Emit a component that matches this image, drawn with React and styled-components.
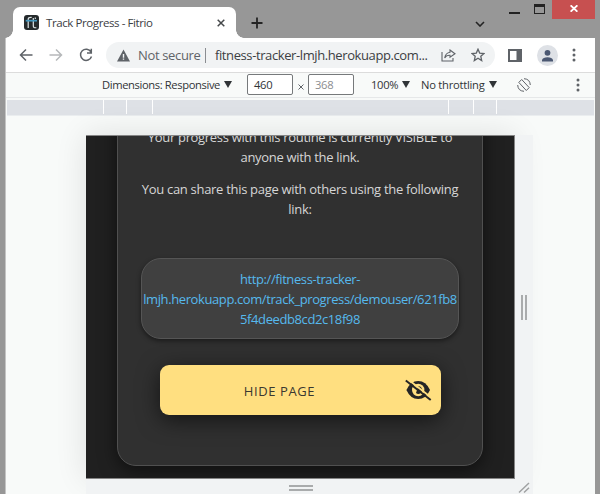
import React from "react";
import styled, { createGlobalStyle } from "styled-components";

const Global = createGlobalStyle`
  * { box-sizing: border-box; }
  body { margin: 0; overflow: hidden; font-family: "Open Sans", "Noto Sans", sans-serif; }
`;

const Desktop = styled.div`
  width: 600px; height: 494px; background: #979797; padding: 0 5px;
  display: flex; flex-direction: column; overflow: hidden;
`;
const TabStrip = styled.header`
  height: 38px; display: flex; align-items: flex-start; flex: none;
`;
const Tab = styled.div`
  position: relative; margin: 7px 0 0 8px; width: 223px; height: 31px; background: #fff;
  border-radius: 7px 7px 0 0; display: flex; align-items: center; padding: 0 11px 0 11px;
  &::before, &::after {
    content: ""; position: absolute; bottom: 0; width: 8px; height: 8px;
  }
  &::before { left: -8px; background: radial-gradient(circle at 0 0, transparent 7.5px, #fff 8px); }
  &::after { right: -8px; background: radial-gradient(circle at 100% 0, transparent 7.5px, #fff 8px); }
`;
const TabTitle = styled.span`
  margin-left: 7px; flex: 1; font-size: 11.5px; letter-spacing: ${(p) => p.$track}px;
  color: #3c4043; white-space: nowrap; line-height: 16px;
`;
const NewTab = styled.div`margin: 17px 0 0 15px; height: 12px; display: flex;`;
const TabSearch = styled.div`margin: 21px 0 0 auto; height: 6px; display: flex;`;
const Minimise = styled.div`width: 11px; height: 2px; background: #222; margin: 12px 0 0 24px;`;
const Maximise = styled.div`
  width: 11px; height: 10px; border: 1px solid #222; border-top-width: 3px; margin: 4px 0 0 14px;
`;
const Close = styled.div`
  width: 43px; height: 19px; background: #c75050; margin-left: 7px;
  display: flex; align-items: center; justify-content: center; padding-bottom: 2px;
`;
const Body = styled.main`
  flex: 1; min-height: 0; display: flex; flex-direction: column; background: #f8faf9;
  border-left: 1px solid #c4c4c4;
`;
const Toolbar = styled.nav`
  height: 35px; flex: none; background: #fff; border-bottom: 1px solid #dcdcdc;
  display: flex; align-items: center; padding: 0 19px 0 13px;
`;
const NavIcons = styled.div`display: flex; gap: 16px; width: 87px;`;
const Address = styled.div`
  width: 389px; height: 26px; border-radius: 13px; background: #f1f3f4;
  display: flex; align-items: center; padding: 0 10px 0 11px; white-space: nowrap;
  font-size: 13px; line-height: 20px;
`;
const Security = styled.span`
  margin-left: 8px; color: #5f6368; width: 67px; letter-spacing: ${(p) => p.$track}px;
`;
const Rule = styled.i`width: 1px; height: 15px; background: #8a8d91; margin-right: 9px;`;
const Url = styled.span`color: #3c4043; flex: 1; letter-spacing: ${(p) => p.$track}px;`;
const AddressIcons = styled.span`display: flex; gap: 15px;`;
const Actions = styled.div`
  flex: 1; display: flex; align-items: center; justify-content: space-between; padding-left: 13px;
`;
const Avatar = styled.span`
  width: 21px; height: 21px; border-radius: 50%; background: #dee1e6; display: flex;
`;
const DeviceBar = styled.div`
  height: 25px; flex: none; display: flex; align-items: center; padding: 0 15px 1px 96px;
  border-bottom: 1px solid #e6e8e9; font-size: 11.2px; color: #303437; white-space: nowrap;
  background: #f8faf9;
`;
const Choice = styled.span`
  display: flex; align-items: center; justify-content: space-between; width: ${(p) => p.$w}px;
  margin-right: ${(p) => p.$gap}px; letter-spacing: ${(p) => p.$track}px;
`;
const Caret = styled.i`
  border: 4px solid transparent; border-top: 7px solid #303437; border-bottom: 0;
`;
const SizeField = styled.span`
  width: 46px; height: 21px; border: 1px solid #76797b; border-radius: 2px; background: #fff;
  padding-left: 6px; line-height: 19px; letter-spacing: -0.3px; flex: none;
  color: ${(p) => (p.$muted ? "#8b8d8f" : "#303437")};
`;
const Times = styled.span`width: 15px; display: flex; justify-content: center; padding-top: 4px;`;
const Zoom = styled.span`display: flex; margin-left: 17px;`;
const Rotate = styled.span`display: flex; flex: 1;`;
const Ruler = styled.div`
  height: 16px; flex: none; margin: 2px 1px 0 1px; background: #dee1e6; display: flex;
  border-bottom: 1px solid #eaedef;
`;
const Tick = styled.i`
  width: ${(p) => p.$w}px; border-right: 1px solid #fff; margin-bottom: 1px;
`;
const Stage = styled.section`
  flex: 1; min-height: 0; display: grid; grid-template-columns: 429px 18px;
  grid-template-rows: 344px 16px; padding: 19px 0 0 80px;
`;
const Screen = styled.div`
  overflow: hidden; background: #202020; border: solid #858585; border-width: 1px 1px 1px 0;
  box-shadow: 0 0 30px #0000001c; padding: 0 0 0 31px;
`;
const Card = styled.article`
  width: 366px; height: 360px; margin-top: -30px; background: #303030; border: 1px solid #505050;
  border-radius: 19px; box-shadow: 0 5px 18px #0008; padding-top: 21px;
  display: flex; flex-direction: column; align-items: center; color: #d6d6d6;
`;
const Copy = styled.p`
  margin: 0 0 13px; font-size: 13px; line-height: 19.6px; text-align: center;
  white-space: nowrap; letter-spacing: ${(p) => p.$track}px;
`;
const LinkBox = styled.a`
  width: 318px; height: 81px; margin-top: 26px; border: 1px solid #555; border-radius: 20px;
  background: #404040; box-shadow: 0 2px 5px #0007; color: #56b9ed; font-size: 13px;
  line-height: 19.7px; text-align: center; padding-top: 11px; white-space: nowrap;
  letter-spacing: ${(p) => p.$track}px;
`;
const HideButton = styled.button`
  width: 281px; height: 50px; flex: none; margin-top: 26px; border: 0; border-radius: 9px;
  background: #ffdf80; box-shadow: 0 5px 22px #0009; display: flex; align-items: center;
  padding: 0 9px 0 0; font: 13px "Open Sans", sans-serif; color: #3a3830;
`;
const HideLabel = styled.span`flex: 1; text-align: center; letter-spacing: 0.6px; padding: 2px 4px 0 0;`;
const RightHandle = styled.div`
  background: #f1f3f4; display: flex; align-items: center; justify-content: center;
`;
const BottomHandle = styled.div`
  background: #f1f3f4; display: flex; justify-content: center; padding-top: 6px;
`;
const Grip = styled.i`
  width: ${(p) => (p.$vertical ? 6 : 24)}px; height: ${(p) => (p.$vertical ? 25 : 6)}px;
  border: 0 solid #a9abac; border-width: ${(p) => (p.$vertical ? "0 2px" : "2px 0")};
`;
const Corner = styled.div`background: #f1f3f4; display: flex; padding: 3px 0 0 3px;`;

const Stroke = ({ w = 12, h = w, box = `0 0 ${w} ${h}`, color = "#5f6368", sw = 1.5, d }) => (
  <svg width={w} height={h} viewBox={box} fill="none" stroke={color} strokeWidth={sw}><path d={d} /></svg>
);
const Solid = ({ size, color, d }) => (
  <svg width={size} height={size} viewBox="0 0 24 24" fill={color}><path d={d} /></svg>
);
const Dots = () => (
  <svg width="4" height="14" viewBox="0 0 4 14" fill="#5f6368">
    <circle cx="2" cy="2" r="1.5" /><circle cx="2" cy="7" r="1.5" /><circle cx="2" cy="12" r="1.5" />
  </svg>
);
const Favicon = () => (
  <svg width="15" height="15" viewBox="0 0 15 15">
    <rect width="15" height="15" rx="3" fill="#252a2c" />
    <path d="M4.2 13V4.2Q4.2 2.3 6.8 2.3H7.7M9.3 3V11Q9.3 13 12.3 12.7M11.3 2.5V4" fill="none" stroke="#dce4e6" strokeWidth="1.2" />
    <path d="M1.7 5.7H13" stroke="#4095bd" strokeWidth="1.7" />
  </svg>
);
const EyeOff = () => (
  <svg width="28" height="24" viewBox="0 0 28 24">
    <path d="M2.4 12Q6.5 3 14.2 3T26 12Q22 21 14.2 21T2.4 12Z" fill="#252525" />
    <circle cx="14.2" cy="12" r="6.2" fill="#ffdf80" />
    <path d="M14.2 8.3A3.8 3.8 0 1 1 12 15Z" fill="#252525" />
    <path d="M3.2 .8L27.7 20" stroke="#ffdf80" strokeWidth="1.8" />
    <path d="M1.8 2.5L26.7 22" stroke="#252525" strokeWidth="2" />
  </svg>
);

const rulerTicks = [97, 23, 26, 296, 25, 23];

export default function App() {
  return (
    <Desktop>
      <Global />
      <TabStrip>
        <Tab>
          <Favicon />
          <TabTitle $track={-0.41}>Track Progress - Fitrio</TabTitle>
          <Stroke w={8} color="#45484a" d="M.7 .7L7.3 7.3M7.3 .7L.7 7.3" />
        </Tab>
        <NewTab><Stroke w={12} color="#242424" sw={1.8} d="M6 .5V11.5M.5 6H11.5" /></NewTab>
        <TabSearch><Stroke w={10} h={6} color="#242424" sw={1.6} d="M1 1L5 5L9 1" /></TabSearch>
        <Minimise />
        <Maximise />
        <Close><Stroke w={8} h={7} color="#fff" sw={1.8} d="M.6 .3L7.4 6.7M7.4 .3L.6 6.7" /></Close>
      </TabStrip>
      <Body>
        <Toolbar>
          <NavIcons>
            <Stroke w={14} d="M13.5 7H2M7 1.5L1.5 7L7 12.5" />
            <Stroke w={14} color="#b6b8ba" d="M.5 7H12M7 1.5L12.5 7L7 12.5" />
            <Stroke w={14} d="M12 4A5.6 5.6 0 1 0 12.5 8.5M12.3 .8V5H8" />
          </NavIcons>
          <Address>
            <Solid size={13} color="#5f6368" d="M12 1L0 23h24L12 1zm-1.3 8h2.6v7h-2.6V9zm0 8.5h2.6V20h-2.6z" />
            <Security $track={-0.35}>Not secure</Security>
            <Rule />
            <Url $track={-0.4}>fitness-tracker-lmjh.herokuapp.com...</Url>
            <AddressIcons>
              <Stroke w={15} h={14} sw={1.1} d="M1 4V13H12V10M9 2L14 5.8L9 9.3V7.3Q5.5 7 3.7 10Q4.5 4.8 9 4.2Z" />
              <Stroke w={14} sw={1.3} d="M7 1.2L8.7 5.1L13 5.5L9.8 8.3L10.7 12.6L7 10.3L3.3 12.6L4.2 8.3L1 5.5L5.3 5.1Z" />
            </AddressIcons>
          </Address>
          <Actions>
            <svg width="14" height="13" viewBox="0 0 14 13"><path fill="#5f6368" d="M0 0H14V13H0ZM2 2V11H8.5V2Z" fillRule="evenodd" /></svg>
            <Avatar>
              <svg width="21" height="21" viewBox="0 0 21 21" fill="#4b5872">
                <circle cx="10.5" cy="7.8" r="2.9" /><path d="M5 16.5V14.8Q6 12.2 10.5 12.2T16 14.8V16.5Z" />
              </svg>
            </Avatar>
            <Dots />
          </Actions>
        </Toolbar>
        <DeviceBar>
          <Choice $w={130} $gap={15} $track={-0.38}>Dimensions: Responsive<Caret /></Choice>
          <SizeField>460</SizeField>
          <Times><Stroke w={6} sw={1} d="M.5 .5L5.5 5.5M5.5 .5L.5 5.5" /></Times>
          <SizeField $muted>368</SizeField>
          <Zoom><Choice $w={39} $gap={11} $track={-0.3}>100%<Caret /></Choice></Zoom>
          <Choice $w={76} $gap={20} $track={-0.25}>No throttling<Caret /></Choice>
          <Rotate>
            <Stroke w={14} sw={1} d="M4.7 1.5L1.8 4.4L9.3 12.5L12.2 9.6ZM7 .7Q13 1 13.3 7M.7 7Q1 13 7 13.3" />
          </Rotate>
          <Dots />
        </DeviceBar>
        <Ruler>{rulerTicks.map((w, i) => <Tick key={i} $w={w} />)}</Ruler>
        <Stage>
          <Screen>
            <Card>
              <Copy $track={-0.32}>Your progress with this routine is currently VISIBLE to<br />anyone with the link.</Copy>
              <Copy $track={-0.3}>You can share this page with others using the following<br />link:</Copy>
              <LinkBox $track={-0.4}>http://fitness-tracker-<br />lmjh.herokuapp.com/track_progress/demouser/621fb8<br />5f4deedb8cd2c18f98</LinkBox>
              <HideButton>
                <HideLabel>HIDE PAGE</HideLabel>
                <EyeOff />
              </HideButton>
            </Card>
          </Screen>
          <RightHandle><Grip $vertical /></RightHandle>
          <BottomHandle><Grip /></BottomHandle>
          <Corner><Stroke w={12} color="#a0a2a3" sw={1.5} d="M1 10.5L11 1M6 10.5L11 5.8" /></Corner>
        </Stage>
      </Body>
    </Desktop>
  );
}
